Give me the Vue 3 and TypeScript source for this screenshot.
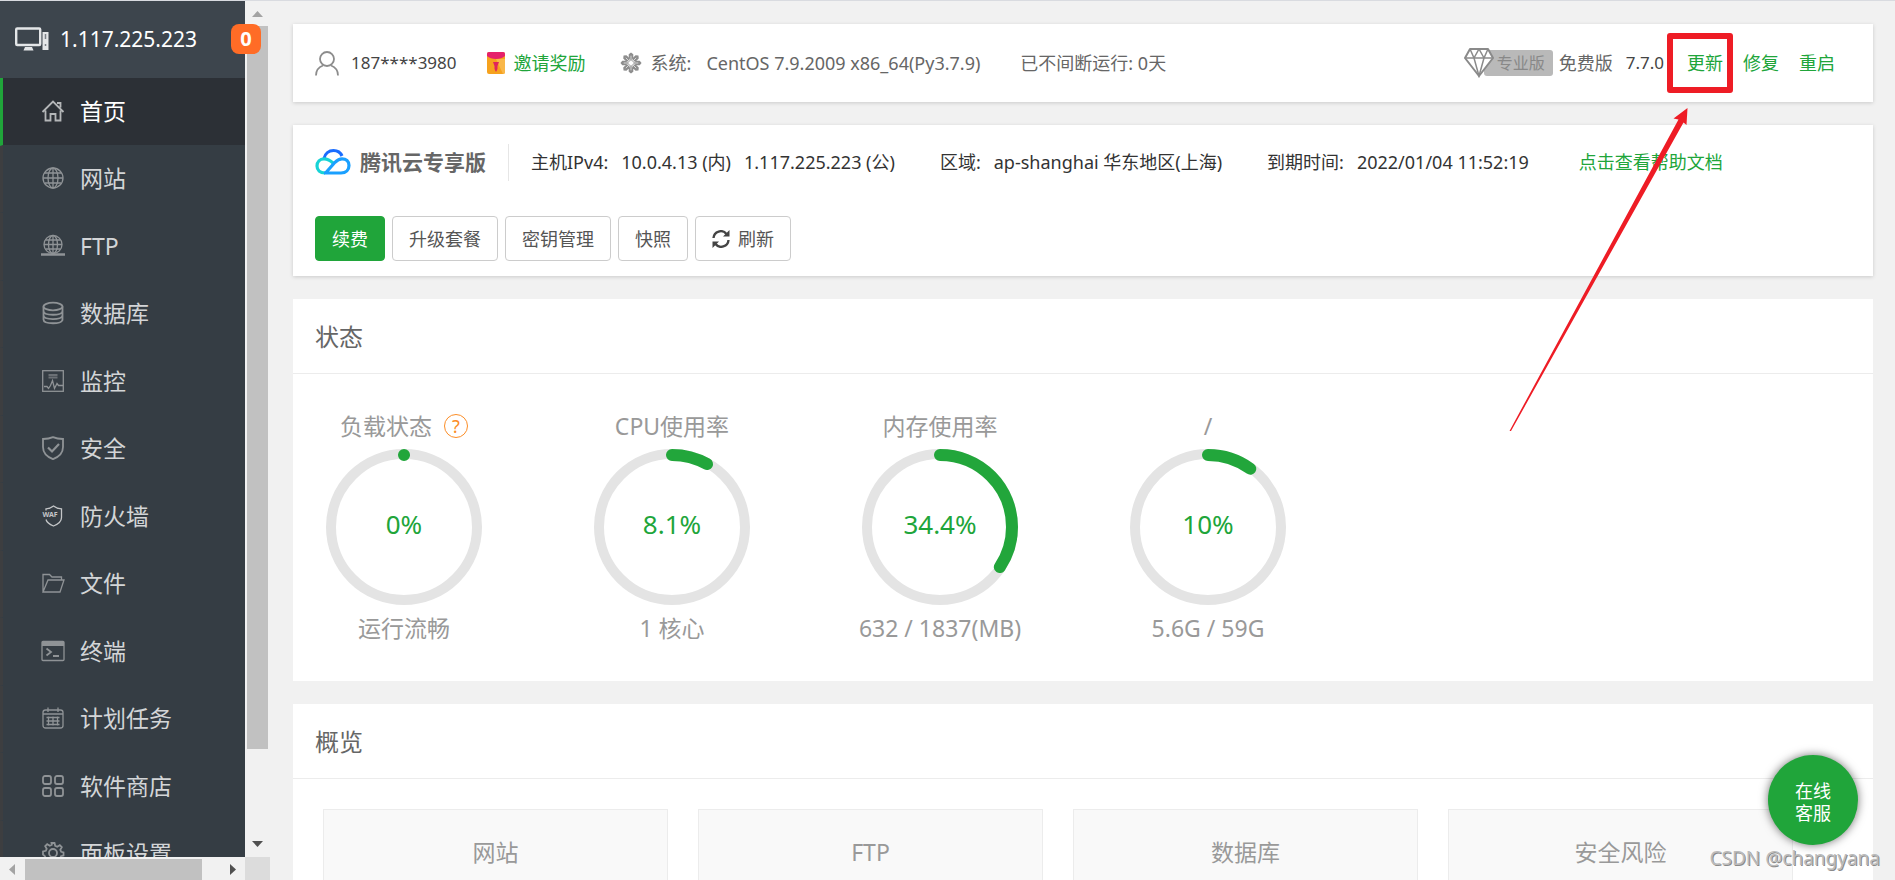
<script setup lang="ts">
interface NavItem { id: string; label: string }
interface Gauge { title: string; value: string; percent: number; note: string; help?: boolean }

const navItems: NavItem[] = [
  { id: 'home', label: '首页' },
  { id: 'site', label: '网站' },
  { id: 'ftp', label: 'FTP' },
  { id: 'database', label: '数据库' },
  { id: 'monitor', label: '监控' },
  { id: 'security', label: '安全' },
  { id: 'waf', label: '防火墙' },
  { id: 'files', label: '文件' },
  { id: 'terminal', label: '终端' },
  { id: 'cron', label: '计划任务' },
  { id: 'store', label: '软件商店' },
  { id: 'settings', label: '面板设置' },
]

const gauges: Gauge[] = [
  { title: '负载状态', value: '0%', percent: 0, note: '运行流畅', help: true },
  { title: 'CPU使用率', value: '8.1%', percent: 8.1, note: '1 核心' },
  { title: '内存使用率', value: '34.4%', percent: 34.4, note: '632 / 1837(MB)' },
  { title: '/', value: '10%', percent: 10, note: '5.6G / 59G' },
]

const overview: string[] = ['网站', 'FTP', '数据库', '安全风险']

const petals: number[] = [0, 45, 90, 135, 180, 225, 270, 315]

function dash(percent: number): string {
  return `${Math.max(percent, 0.01)} 200`
}
</script>

<template>
  <div class="app">
    <aside class="side">
      <div class="side-view">
        <header class="host">
          <svg class="host-icon" viewBox="0 0 34 24" aria-hidden="true">
            <rect x="1.2" y="1.5" width="24" height="16.5" rx="1" fill="none" stroke="#e4e6e8" stroke-width="2.4" />
            <path d="M10 20h7l1.500 3.500h-10z" fill="#e4e6e8" />
            <rect x="27.500" y="5" width="6" height="18" fill="#e4e6e8" />
            <path d="M30.500 7v5M30.500 17v2" stroke="#7b8187" stroke-width="1.500" />
          </svg>
          <span>1.117.225.223</span>
        </header>
        <nav class="nav">
          <a v-for="(item, i) in navItems" :key="item.id" href="#" class="nav-item" :class="{ active: i === 0 }">
            <svg class="nav-icon" viewBox="0 0 24 24" aria-hidden="true">
              <g v-if="item.id === 'home'" class="home">
                <path d="M1.500 13 12 2.500 22.500 13M4.500 11.500v10h5V15h5v6.500h5v-10M16 4h3.500v4.500" />
              </g>
              <g v-else-if="item.id === 'site'">
                <circle cx="12" cy="12" r="10" />
                <ellipse cx="12" cy="12" rx="5" ry="10" />
                <path d="M12 2v20M2 12h20M4 7h16M4 17h16" />
              </g>
              <g v-else-if="item.id === 'ftp'">
                <circle cx="12" cy="10.500" r="9" />
                <ellipse cx="12" cy="10.500" rx="4.500" ry="9" />
                <path d="M12 1.500v18M3 10.500h18M4.500 6h15M4.500 15h15" />
                <path d="M0 20.500h24M9 20.500h6" stroke-width="2.500" />
              </g>
              <g v-else-if="item.id === 'database'" class="bold">
                <ellipse cx="12" cy="5.500" rx="9.500" ry="3.800" />
                <path d="M2.500 5.500v13c0 5 19 5 19 0v-13M2.500 10c0 5 19 5 19 0M2.500 14.300c0 5 19 5 19 0" />
              </g>
              <g v-else-if="item.id === 'monitor'">
                <rect x="1.700" y="1.700" width="20.600" height="20.600" />
                <path d="M3 17.500h3l1.500 2 2-3 2-5 2 8 2.500-5 1.500 2H22" />
                <path d="M7.500 6h9M7.500 8.500h9" stroke-width="2" opacity="0.6" />
              </g>
              <g v-else-if="item.id === 'security'">
                <path d="M12 1.200c-3 1.300-6.500 1.800-10 1.800v8c0 6 4 9.800 10 12.200 6-2.400 10-6.200 10-12.200V3c-3.500 0-7-.5-10-1.800z" stroke-width="1.800" />
                <path d="M7 11.500l4 4 7-7.500" stroke-width="2.200" />
              </g>
              <g v-else-if="item.id === 'waf'" class="bright">
                <path d="M5 6.500V4.800c3 0 5-.8 7.500-2.800 2.500 2 5 2.800 8 2.800v8.700c0 4-3 6.500-8 8.500-4-1.600-6.700-3.500-7.500-6.500" />
                <text x="1.500" y="13">WAF</text>
              </g>
              <g v-else-if="item.id === 'files'">
                <path d="M2 21V3.500h6.500L11 6h9.500v3M2 21h17l4-12H7z" />
              </g>
              <g v-else-if="item.id === 'terminal'">
                <rect x="1" y="2.500" width="22" height="19" rx="1" />
                <path d="M1 5h22" stroke-width="4" />
                <path d="M5.500 9.500l4.500 3.500-4.500 3.500M12 17h6" stroke-width="1.800" />
              </g>
              <g v-else-if="item.id === 'cron'">
                <rect x="2" y="4" width="20" height="18" rx="2.500" />
                <path d="M7 1.500V6M17 1.500V6M2 8h20M5.500 11.500h13M5.500 15h13M5.500 18.500h13M7.500 10.500v9M12 10.500v9M16.500 10.500v9" />
              </g>
              <g v-else-if="item.id === 'store'" class="bold">
                <rect x="2" y="2" width="8" height="8" rx="2" />
                <rect x="14" y="2" width="8" height="8" rx="2" />
                <rect x="2" y="14" width="8" height="8" rx="2" />
                <rect x="14" y="14" width="8" height="8" rx="2" />
              </g>
              <g v-else class="bold">
                <path d="M10.500 2h3l.7 2.800 2 .9 2.600-1.500 2 2-1.500 2.600.9 2 2.300.7v3l-2.500.7-.9 2 1.500 2.600-2 2-2.600-1.500-2 .9-.5 2.300h-3l-.7-2.500-2-.9-2.600 1.500-2-2 1.500-2.600-.9-2L2 13.500v-3l2.800-.7.9-2-1.500-2.600 2-2 2.600 1.500 2-.9z" />
                <circle cx="12" cy="12" r="4" />
              </g>
            </svg>
            <span>{{ item.label }}</span>
          </a>
        </nav>
      </div>
      <div class="vbar" aria-hidden="true">
        <svg class="varrow" viewBox="0 0 11 6"><path d="M0 6 5.500 0 11 6z" fill="#a3a3a3" /></svg>
        <div class="vthumb"></div>
        <svg class="varrow" viewBox="0 0 11 6"><path d="M0 0h11L5.500 6z" fill="#505050" /></svg>
      </div>
      <div class="hbar" aria-hidden="true">
        <svg class="harrow" viewBox="0 0 6 11"><path d="M6 0v11L0 5.500z" fill="#a3a3a3" /></svg>
        <div class="hthumb"></div>
        <svg class="harrow" viewBox="0 0 6 11"><path d="M0 0v11l6-5.500z" fill="#505050" /></svg>
      </div>
      <div class="corner"></div>
      <span class="count">0</span>
    </aside>

    <main class="main">
      <section class="card raised topbar">
        <svg class="user-icon" viewBox="0 0 24 25" aria-hidden="true">
          <circle cx="12" cy="8" r="7" fill="none" stroke="#8c8c8c" stroke-width="1.800" />
          <path d="M1 24.500c0-5.500 3-8.500 7-10M23 24.500c0-5.500-3-8.500-7-10" fill="none" stroke="#8c8c8c" stroke-width="1.800" />
        </svg>
        <span class="latin dark account">187****3980</span>
        <svg class="gift-icon" viewBox="0 0 18 24" aria-hidden="true">
          <rect x="0" y="1" width="18" height="22" rx="2" fill="#f6a21e" />
          <path d="M9 8h9v13a2 2 0 0 1-2 2z" fill="#f9b749" />
          <path d="M0 3a2 2 0 0 1 2-2h14a2 2 0 0 1 2 2v2c-4 4-14 4-18 0z" fill="#e5206b" />
          <path d="M6 11h6l-1.500 4v3L9 21l-1.500-3v-3z" fill="#e0245c" />
        </svg>
        <a href="#" class="invite">邀请奖励</a>
        <svg class="sys-icon" viewBox="0 0 24 24" aria-hidden="true">
          <g v-for="deg in petals" :key="deg" :transform="`rotate(${deg} 12 12)`">
            <path d="M9.500 2.500 12 0.500l2.500 2v4L12 10 9.500 6.500z" fill="#8d8d8d" />
            <path d="M12 4v5" stroke="#dcdcdc" stroke-width="1" />
          </g>
        </svg>
        <span>系统:</span>
        <span class="os">CentOS 7.9.2009 x86_64(Py3.7.9)</span>
        <span class="uptime">已不间断运行: 0天</span>

        <div class="version">
          <span class="pro">
            <svg class="gem" viewBox="0 0 30 30" aria-hidden="true">
              <path d="M6 1h18l5 9-14 18L1 10z" fill="#fff" stroke="#8a8a8a" stroke-width="2" stroke-linejoin="round" />
              <path d="M1 10h28M6 1l4 9 5 18 5-18 4-9M10 10l5-9 5 9" fill="none" stroke="#8a8a8a" stroke-width="1.500" />
            </svg>
            <span class="pro-text">专业版</span>
          </span>
          <span>免费版</span>
          <span class="latin dark num">7.7.0</span>
          <span class="marked">
            <a href="#">更新</a>
            <span class="mark-box"></span>
            <svg class="mark-arrow" viewBox="0 0 180 326" aria-hidden="true">
              <path d="M178.500 1 177.500 18 174.500 15.500 2 324 0.500 324 169.500 12.500 164.500 11.500z" fill="#ee1c25" />
            </svg>
          </span>
          <a href="#">修复</a>
          <a href="#">重启</a>
        </div>
      </section>

      <section class="card raised cloud">
        <div class="cloud-info">
          <svg class="cloud-logo" viewBox="0 0 36 28" aria-hidden="true">
            <path d="M9 10.500C10 5.500 14 2.500 18.500 2.500c4 0 7 2 8.500 5.500" fill="none" stroke="#1a6dff" stroke-width="3.200" />
            <path d="M18 15c-3-3-6-4.200-9-4.200-4 0-7 3-7 7.200 0 4 3 7 8 7" fill="none" stroke="#17d3d6" stroke-width="3.200" />
            <path d="M9 25h17c5 0 8-3 8-7.500S31 10.800 27 10.800c-3 0-5 1.500-7 3.500L11 24.500" fill="none" stroke="#1aa0ff" stroke-width="3.200" />
          </svg>
          <h1 class="brand">腾讯云专享版</h1>
          <span class="ip-label">主机IPv4:</span>
          <span class="ip">10.0.4.13 (内)</span>
          <span class="ip">1.117.225.223 (公)</span>
          <span class="group">区域:</span>
          <span class="ip">ap-shanghai 华东地区(上海)</span>
          <span class="group">到期时间:</span>
          <span class="ip">2022/01/04 11:52:19</span>
          <a href="#" class="doc">点击查看帮助文档</a>
        </div>
        <div class="actions">
          <button type="button" class="btn primary">续费</button>
          <button type="button" class="btn">升级套餐</button>
          <button type="button" class="btn">密钥管理</button>
          <button type="button" class="btn">快照</button>
          <button type="button" class="btn">
            <svg class="refresh" viewBox="0 0 18 18" aria-hidden="true">
              <path d="M1.500 8A7.300 7.300 0 0 1 14.500 4M16.500 10A7.300 7.300 0 0 1 3.500 14" fill="none" stroke="#444" stroke-width="2.400" />
              <path d="M17.500 0v6.500H11zM.5 18v-6.500H7z" fill="#444" />
            </svg>
            <span>刷新</span>
          </button>
        </div>
      </section>

      <section class="card">
        <h2 class="card-title">状态</h2>
        <div class="gauges">
          <div v-for="g in gauges" :key="g.title" class="gauge">
            <div class="gauge-label">
              <span>{{ g.title }}</span>
              <a v-if="g.help" href="#" class="help" aria-label="负载状态说明">?</a>
            </div>
            <div class="ring">
              <svg viewBox="0 0 156 156" aria-hidden="true">
                <circle cx="78" cy="78" r="73" fill="none" stroke="#e4e4e4" stroke-width="10" />
                <circle
                  cx="78" cy="78" r="72" fill="none" stroke="#22a63b" stroke-width="12" stroke-linecap="round"
                  pathLength="100" :stroke-dasharray="dash(g.percent)" transform="rotate(-90 78 78)"
                />
              </svg>
              <span class="ring-value">{{ g.value }}</span>
            </div>
            <div class="gauge-label">{{ g.note }}</div>
          </div>
        </div>
      </section>

      <section class="card">
        <h2 class="card-title">概览</h2>
        <div class="overview">
          <div v-for="name in overview" :key="name" class="tile">{{ name }}</div>
        </div>
      </section>
    </main>

    <button type="button" class="service">在线<br />客服</button>
    <span class="watermark">CSDN @changyana</span>
  </div>
</template>

<style>
body {
  background: #f1f1f1;
}
</style>

<style scoped>
.app {
  position: relative;
  display: flex;
  height: 100vh;
  box-sizing: border-box;
  overflow: hidden;
  border-top: 1px solid #d9dbe0;
  background: #f1f1f1;
  color: #666;
  font: 18px/26px "Noto Sans", "Noto Sans CJK SC", sans-serif;
}
a {
  color: #20a53a;
  text-decoration: none;
}
.side {
  position: relative;
  display: grid;
  grid-template: minmax(0, 1fr) 23px / 245px 25px;
  flex: none;
}
.side-view {
  overflow: hidden;
  background: #353d44;
}
.host {
  display: flex;
  align-items: center;
  gap: 11px;
  height: 77px;
  box-sizing: border-box;
  padding: 0 0 2px 15px;
  background: #3d454d;
  color: #fff;
  font-size: 21px;
}
.host-icon {
  width: 34px;
  height: 24px;
}
.nav {
  display: grid;
  grid-auto-rows: 1fr;
  height: 810px;
}
.nav-item {
  display: flex;
  align-items: center;
  gap: 15px;
  padding: 0 0 1px 38px;
  border-left: 3px solid #3d3e40;
  border-bottom: 1px solid #353d44;
  color: #d3d5d7;
  font-size: 23px;
}
.nav-item.active {
  border-left-color: #20a53a;
  background: #2c3036;
  color: #fff;
}
.nav-icon {
  width: 24px;
  height: 24px;
  fill: none;
  stroke: #8f9396;
  stroke-width: 1.3;
}
.nav-icon .bright {
  stroke: #c4c6c8;
}
.nav-icon .home {
  stroke: #b4b6b8;
  stroke-width: 1.8;
}
.nav-icon .bold {
  stroke-width: 1.8;
}
.nav-icon text {
  fill: #c4c6c8;
  stroke: none;
  font-size: 7px;
  font-weight: 700;
}
.vbar {
  display: flex;
  flex-direction: column;
  align-items: center;
  padding: 10px 2px;
  background: #f1f1f1;
}
.varrow {
  width: 11px;
  height: 6px;
}
.vthumb {
  flex: 0 1 723px;
  width: 100%;
  margin: 9px 0 auto;
  background: #c1c1c1;
}
.hbar {
  display: flex;
  align-items: center;
  padding: 2px 9px 0;
  background: #f1f1f1;
}
.harrow {
  width: 6px;
  height: 11px;
}
.hthumb {
  flex: 0 1 177px;
  height: 100%;
  margin: 0 auto 0 10px;
  background: #c1c1c1;
}
.corner {
  background: #dcdcdc;
}
.count {
  position: absolute;
  top: 23px;
  right: 9px;
  width: 30px;
  border-radius: 8px;
  background: #ff6c26;
  color: #fff;
  font-size: 20px;
  font-weight: 700;
  line-height: 30px;
  text-align: center;
}
.main {
  display: flex;
  flex: 1;
  flex-direction: column;
  gap: 23px;
  min-width: 0;
  padding: 23px 22px 0 23px;
}
.card {
  flex: none;
  background: #fff;
}
.raised {
  box-shadow: 0 1px 4px rgba(0, 0, 0, 0.16);
}
.topbar {
  display: flex;
  align-items: center;
  height: 78px;
  box-sizing: border-box;
  padding: 0 38px 0 22px;
  white-space: nowrap;
}
.latin {
  font-size: 17px;
}
.dark {
  color: #444;
}
.user-icon {
  width: 24px;
  height: 25px;
  margin-right: 12px;
}
.account {
  margin-right: 30px;
}
.gift-icon {
  width: 18px;
  height: 24px;
  margin-right: 9px;
}
.invite {
  margin-right: 34px;
}
.sys-icon {
  width: 22px;
  height: 22px;
  margin-right: 9px;
}
.os {
  margin: 0 40px 0 15px;
}
.version {
  display: flex;
  align-items: center;
  margin-left: auto;
}
.version > a {
  margin-left: 20px;
}
.pro {
  display: flex;
  align-items: center;
  margin-right: 6px;
}
.gem {
  z-index: 1;
  width: 30px;
  height: 30px;
}
.pro-text {
  margin-left: -10px;
  padding: 0 8px 0 13px;
  border-radius: 3px;
  background: #b9b9b9;
  color: #888;
  font-size: 16px;
}
.num {
  margin-left: 13px;
}
.marked {
  position: relative;
  z-index: 5;
  margin-left: 23px;
}
.mark-box {
  position: absolute;
  inset: -17px -10px -17px -20px;
  border: 6px solid #ee1c25;
  border-radius: 3px;
  pointer-events: none;
}
.mark-arrow {
  position: absolute;
  top: 57px;
  left: -178px;
  width: 180px;
  height: 326px;
  pointer-events: none;
}
.cloud {
  height: 151px;
  box-sizing: border-box;
  padding: 18px 22px 0;
}
.cloud-info {
  display: flex;
  align-items: center;
  height: 38px;
  color: #333;
  white-space: nowrap;
}
.cloud-logo {
  width: 36px;
  height: 28px;
}
.brand {
  margin: 0 22px 0 9px;
  color: #666;
  font-size: 21px;
  font-weight: 700;
}
.ip-label {
  padding-left: 22px;
  border-left: 1px solid #e6e6e6;
  line-height: 37px;
}
.ip {
  margin-left: 13px;
}
.group {
  margin-left: 45px;
}
.doc {
  margin-left: 50px;
}
.actions {
  display: flex;
  gap: 7px;
  margin-top: 35px;
}
.btn {
  display: flex;
  align-items: center;
  gap: 8px;
  height: 45px;
  padding: 0 16px;
  border: 1px solid #ccc;
  border-radius: 4px;
  background: #fff;
  color: #555;
  font: inherit;
}
.btn.primary {
  border-color: #20a53a;
  background: #20a53a;
  color: #fff;
}
.refresh {
  width: 18px;
  height: 18px;
}
.card-title {
  margin: 0;
  padding: 2px 22px 0;
  border-bottom: 1px solid #ececec;
  font-size: 24px;
  font-weight: 400;
  line-height: 72px;
}
.gauges {
  display: flex;
  gap: 100px;
  padding: 35px 27px 36px;
}
.gauge {
  display: flex;
  flex-direction: column;
  align-items: center;
  gap: 6px;
  width: 168px;
}
.gauge-label {
  display: flex;
  align-items: center;
  gap: 12px;
  color: #999;
  font-size: 23px;
  line-height: 34px;
  white-space: nowrap;
}
.help {
  width: 22px;
  border: 1px solid #fc8d26;
  border-radius: 50%;
  color: #fc8d26;
  font-size: 18px;
  line-height: 22px;
  text-align: center;
}
.ring {
  display: grid;
  place-items: center;
  width: 156px;
  height: 156px;
}
.ring > * {
  grid-area: 1 / 1;
}
.ring-value {
  padding-bottom: 6px;
  color: #20a53a;
  font-size: 26px;
}
.overview {
  display: grid;
  grid-template-columns: repeat(4, 1fr);
  gap: 30px;
  padding: 30px 80px 30px 30px;
}
.tile {
  height: 150px;
  box-sizing: border-box;
  padding-top: 25px;
  border: 1px solid #ececec;
  background: #f9f9f9;
  color: #999;
  font-size: 23px;
  line-height: 34px;
  text-align: center;
}
.service {
  position: absolute;
  right: 37px;
  bottom: 35px;
  width: 90px;
  height: 90px;
  padding: 4px 0 0;
  border: 0;
  border-radius: 50%;
  background: #20a53a;
  box-shadow: 0 0 10px rgba(0, 0, 0, 0.55);
  color: #fff;
  font: inherit;
  line-height: 22px;
}
.watermark {
  position: absolute;
  right: 15px;
  bottom: 8px;
  color: #bbb;
  font-size: 19px;
  line-height: 28px;
  text-shadow: 1px 1px 0 #8a8a8a;
}
</style>
